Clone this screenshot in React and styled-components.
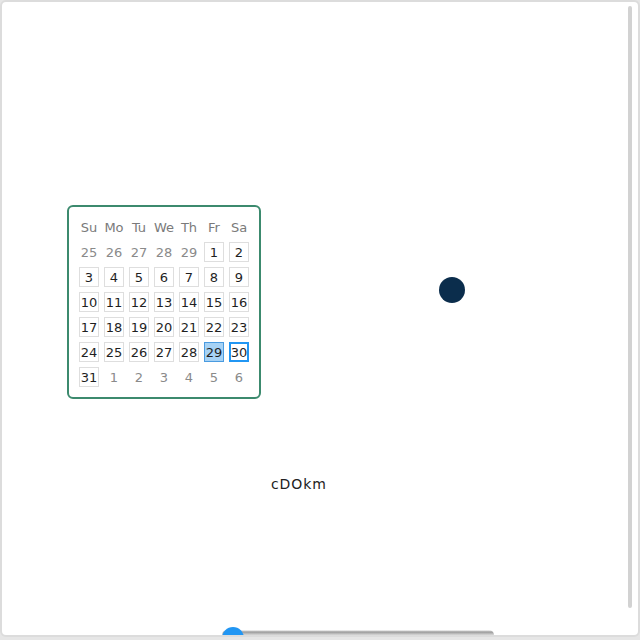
import React, { Fragment } from "react";
import styled, { createGlobalStyle } from "styled-components";

const GlobalStyle = createGlobalStyle`
    html, body {
        margin: 0;
        padding: 0;
        background: #000;
    }
    body {
        font-family: "DejaVu Sans", "Noto Sans", sans-serif;
    }
`;

const weekdays = ["Su", "Mo", "Tu", "We", "Th", "Fr", "Sa"];

// month starts on a Friday, 31 days, padded with the neighbouring months
const buildDays = () => {
    const days = [];
    [25, 26, 27, 28, 29].forEach((d) => days.push({ day: d, outside: true }));
    for (let d = 1; d <= 31; d++) days.push({ day: d, outside: false });
    [1, 2, 3, 4, 5, 6].forEach((d) => days.push({ day: d, outside: true }));
    return days;
};

const App = () => {
    const days = buildDays();
    return (
        <Fragment>
            <GlobalStyle />
            <Page>
                <Frame>
                    <Body>
                        <Canvas>
                            <Calendar>
                                {weekdays.map((w) => (
                                    <Weekday key={w}>{w}</Weekday>
                                ))}
                                {days.map((d, i) => (
                                    <Day
                                        key={i}
                                        $outside={d.outside}
                                        $selected={!d.outside && d.day === 29}
                                        $focused={!d.outside && d.day === 30}
                                    >
                                        {d.day}
                                    </Day>
                                ))}
                            </Calendar>
                            <Dot />
                            <Label>cDOkm</Label>
                        </Canvas>
                        <ScrollRail>
                            <ScrollThumb />
                        </ScrollRail>
                    </Body>
                    <SliderRow>
                        <Slider>
                            <Thumb />
                        </Slider>
                    </SliderRow>
                </Frame>
            </Page>
        </Fragment>
    );
};

const Page = styled.div`
    width: 640px;
    height: 640px;
    background: #e6e6e6;
    overflow: hidden;
`;

const Frame = styled.div`
    box-sizing: border-box;
    display: flex;
    flex-direction: column;
    width: 640px;
    height: 637px;
    background: #fff;
    border: 2px solid #dcdcdc;
    border-radius: 6px;
    overflow: hidden;
`;

const Body = styled.div`
    flex: 1;
    display: flex;
    min-height: 0;
`;

const Canvas = styled.div`
    position: relative;
    flex: 1;
`;

const ScrollRail = styled.div`
    display: flex;
    padding: 4px 6px 0 0;
`;

const ScrollThumb = styled.div`
    width: 4px;
    height: 602px;
    border-radius: 2px;
    background: #d2d2d2;
`;

const Calendar = styled.div`
    position: absolute;
    left: 65px;
    top: 203px;
    display: grid;
    grid-template-columns: repeat(7, 20px);
    grid-auto-rows: 20px;
    gap: 5px;
    padding: 10px;
    border: 2px solid #3c8a6e;
    border-radius: 6px;
    background: #fff;
`;

const Weekday = styled.div`
    display: flex;
    align-items: center;
    justify-content: center;
    font-size: 13px;
    color: #7a7a7a;
    white-space: nowrap;
`;

const Day = styled.div`
    box-sizing: border-box;
    display: flex;
    align-items: center;
    justify-content: center;
    font-size: 13px;
    color: ${(p) => (p.$outside ? "#8a8a8a" : "#1f1f1f")};
    border: ${(p) =>
        p.$outside
            ? "1px solid transparent"
            : p.$focused
            ? "2px solid #2196f3"
            : p.$selected
            ? "1px solid #4a9be0"
            : "1px solid #dedede"};
    background: ${(p) => (p.$selected ? "#a6d2f5" : "transparent")};
`;

const Dot = styled.div`
    position: absolute;
    left: 437px;
    top: 275px;
    width: 26px;
    height: 26px;
    border-radius: 50%;
    background: #0b2d4c;
`;

const Label = styled.div`
    position: absolute;
    left: 269px;
    top: 474px;
    font-size: 14px;
    letter-spacing: 0.9px;
    color: #222;
`;

const SliderRow = styled.div`
    display: flex;
    height: 5px;
    padding-left: 220px;
    overflow: visible;
`;

const Slider = styled.div`
    display: flex;
    align-items: flex-start;
    width: 272px;
    height: 10px;
    border-radius: 5px;
    background: linear-gradient(#fff 0%, #9a9a9a 20%, #d8d8d8 50%, #eee 100%);
`;

const Thumb = styled.div`
    flex: none;
    width: 22px;
    height: 22px;
    margin-top: -3px;
    border-radius: 50%;
    background: #2196f3;
`;

export default App;
